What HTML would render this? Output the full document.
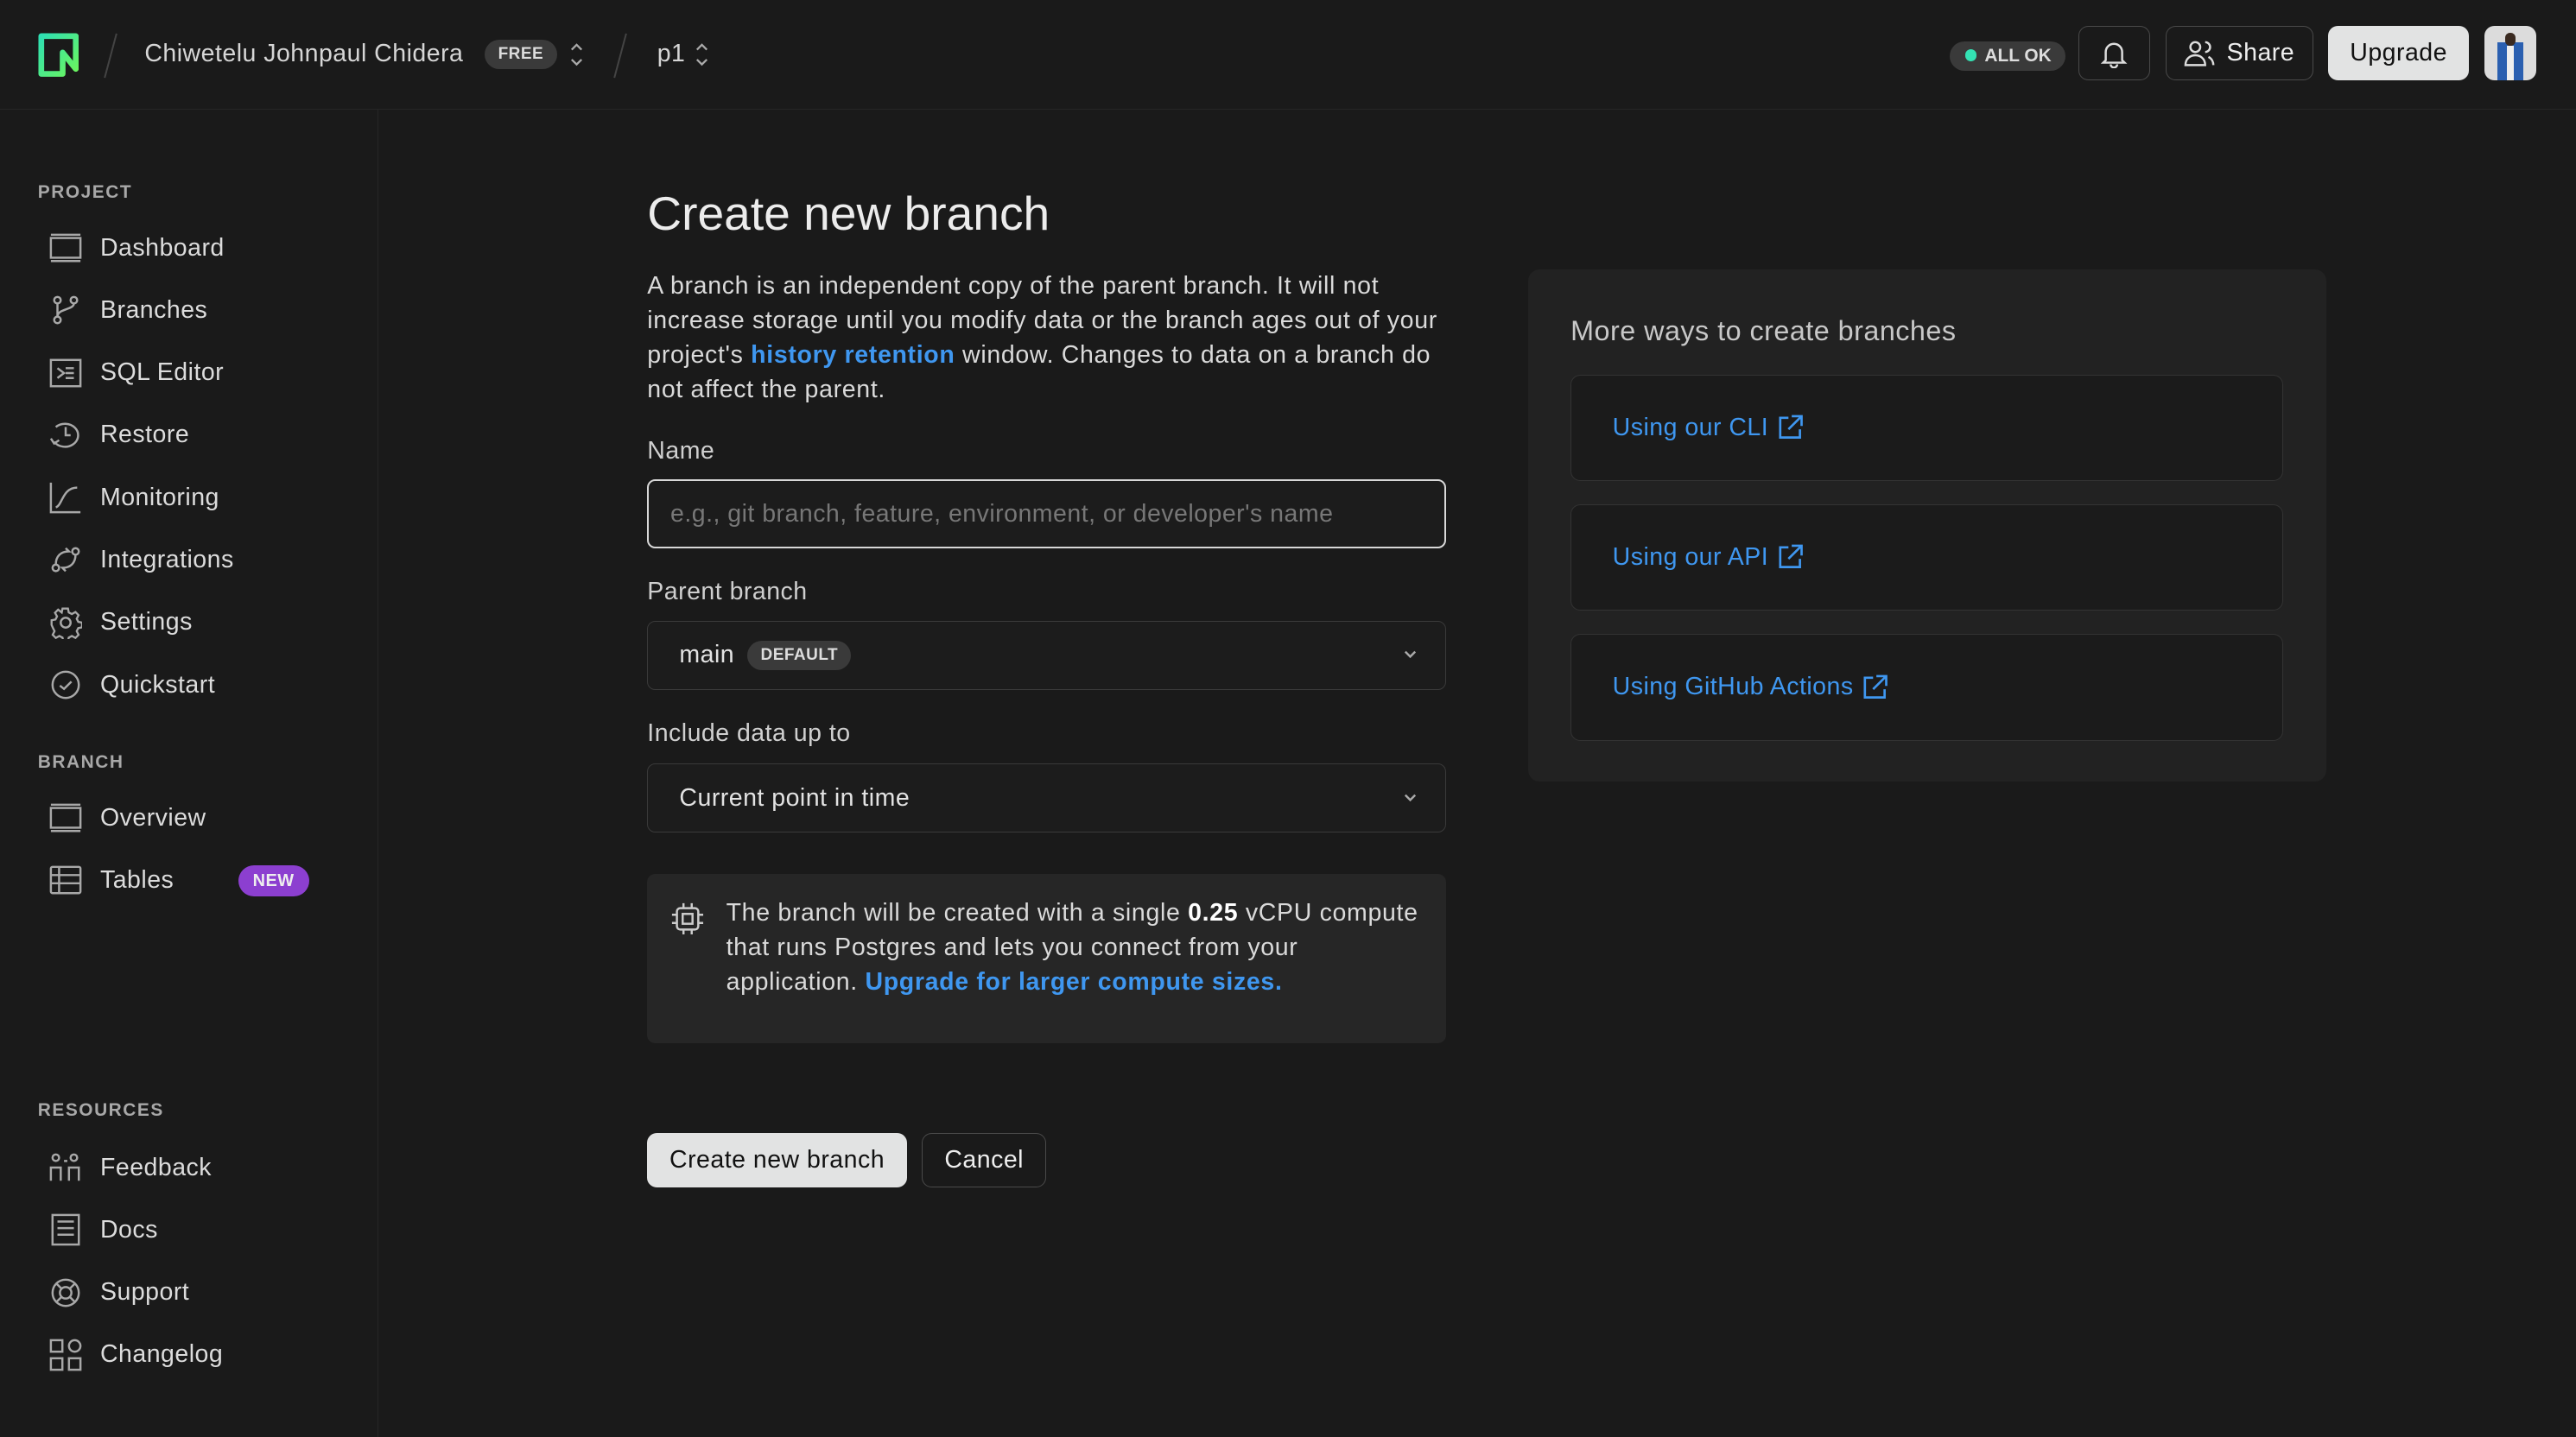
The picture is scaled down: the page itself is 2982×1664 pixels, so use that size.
<!DOCTYPE html>
<html><head><meta charset="utf-8"><style>
html,body{margin:0;padding:0;background:#1a1a1a;}
body{width:1568px;height:875px;zoom:1.9018;overflow:hidden;position:relative;font-family:"Liberation Sans",sans-serif;color:#e2e2e2;letter-spacing:0.25px;}
.abs{position:absolute;}
.top{left:0;top:0;width:1568px;height:66px;border-bottom:1px solid #262626;}
.side{left:0;top:67px;width:230px;height:808px;border-right:1px solid #262626;}
.sec{position:absolute;left:23px;font-size:11px;font-weight:bold;letter-spacing:.8px;color:#a8a8a8;}
.item{position:absolute;left:30px;height:24px;display:flex;align-items:center;font-size:15px;color:#dcdcdc;}
.item svg{width:20px;height:20px;margin-right:11px;stroke:#a8a8a8;fill:none;stroke-width:1.3;}
.lbl{font-size:15px;color:#cfcfcf;}
.field{position:absolute;left:394px;width:486px;height:42px;box-sizing:border-box;border:1px solid #3a3a3a;border-radius:5px;background:#1c1c1c;display:flex;align-items:center;font-size:15px;}
.btn{position:absolute;box-sizing:border-box;border:1px solid #4a4a4a;border-radius:6px;display:flex;align-items:center;justify-content:center;font-size:15px;}
.card{position:absolute;left:956px;width:434px;height:65px;border:1px solid #333;border-radius:6px;background:#1b1b1b;display:flex;align-items:center;padding-left:25px;box-sizing:border-box;color:#3f97f0;font-size:15px;}
.card svg{margin-left:5px}
a{color:#3f97f0;text-decoration:none;font-weight:bold;}
.chev{position:absolute;right:16px;top:15px}
</style></head><body>
<div class="abs top"></div>
<svg class="abs" style="left:23px;top:20px" width="25" height="27" viewBox="0 0 25 27"><defs><linearGradient id="g" x1="0" y1="0" x2="1" y2="1"><stop offset="0" stop-color="#2ee0b2"/><stop offset="1" stop-color="#6bf55e"/></linearGradient></defs><path d="M2 25V2h21v20l-8-10v13z" fill="none" stroke="url(#g)" stroke-width="3.5" stroke-linejoin="round"/></svg>
<div class="abs" style="left:67px;top:20px;width:1px;height:28px;background:#444;transform:rotate(15deg)"></div>
<div class="abs" style="left:88px;top:24px;font-size:15px;color:#d6d6d6">Chiwetelu Johnpaul Chidera</div>
<div class="abs" style="left:295px;top:24px;width:44px;height:18px;border-radius:9px;background:#3a3a3a;font-size:10px;font-weight:bold;color:#ddd;text-align:center;line-height:18px">FREE</div>
<svg class="abs" style="left:346px;top:25px" width="10" height="16" viewBox="0 0 10 16" fill="none" stroke="#aaa" stroke-width="1.2"><path d="M2 5l3-3 3 3M2 11l3 3 3-3"/></svg>
<div class="abs" style="left:377px;top:20px;width:1px;height:28px;background:#444;transform:rotate(15deg)"></div>
<div class="abs" style="left:400px;top:24px;font-size:15px;color:#d6d6d6">p1</div>
<svg class="abs" style="left:422px;top:25px" width="10" height="16" viewBox="0 0 10 16" fill="none" stroke="#aaa" stroke-width="1.2"><path d="M2 5l3-3 3 3M2 11l3 3 3-3"/></svg>

<div class="abs" style="left:1187px;top:25px;width:70px;height:18px;border-radius:9px;background:#3a3a3a;font-size:11px;font-weight:bold;color:#ddd;line-height:18px;letter-spacing:0"><span style="display:inline-block;width:7px;height:7px;border-radius:50%;background:#34e2b4;margin:0 5px 0 9px;vertical-align:0"></span>ALL OK</div>
<div class="btn" style="left:1265px;top:16px;width:44px;height:33px;"><svg width="18" height="18" viewBox="0 0 18 18" fill="none" stroke="#ddd" stroke-width="1.3"><path d="M4 13V8a5 5 0 0110 0v5l1.5 1.5h-13zM7 15.5a2 2 0 004 0"/></svg></div>
<div class="btn" style="left:1318px;top:16px;width:90px;height:33px;color:#eee"><svg width="20" height="18" viewBox="0 0 20 18" fill="none" stroke="#ddd" stroke-width="1.3" style="margin-right:6px"><circle cx="7" cy="5" r="3"/><path d="M1 16c0-4 3-6 6-6s6 2 6 6zM13 2a3 3 0 010 6M15 11c2 1 3 3 3 5"/></svg>Share</div>
<div class="btn" style="left:1417px;top:16px;width:86px;height:33px;background:#e2e3e3;border-color:#e2e3e3;color:#111">Upgrade</div>
<div class="abs" style="left:1512px;top:16px;width:32px;height:33px;border-radius:6px;background:#dcdcdc;overflow:hidden"><div style="position:absolute;left:8px;top:10px;width:16px;height:23px;background:#2a5fb0"></div><div style="position:absolute;left:13px;top:4px;width:6px;height:8px;border-radius:3px;background:#3a2a20"></div><div style="position:absolute;left:14px;top:12px;width:4px;height:21px;background:#eee"></div></div>

<div class="abs side"></div>
<div class="sec" style="top:111px">PROJECT</div>
<div class="item" style="top:139px"><svg viewBox="0 0 20 20"><rect x="1" y="4" width="18" height="12"/><path d="M1 2h18M1 18h18"/></svg>Dashboard</div>
<div class="item" style="top:177px"><svg viewBox="0 0 20 20"><circle cx="5" cy="4" r="2"/><circle cx="15" cy="4" r="2"/><circle cx="5" cy="16" r="2"/><path d="M5 6v8M15 6c0 4-10 3-10 8"/></svg>Branches</div>
<div class="item" style="top:215px"><svg viewBox="0 0 20 20"><rect x="1" y="2" width="18" height="16"/><path d="M5 7l4 3-4 3M10 7h5M10 10h5M10 13h5"/></svg>SQL Editor</div>
<div class="item" style="top:253px"><svg viewBox="0 0 20 20"><path d="M3 14a8 7 0 101-9M10 5v5h3M1 12l2 3 3-2"/></svg>Restore</div>
<div class="item" style="top:291px"><svg viewBox="0 0 20 20"><path d="M1 1v18h18M4 16c4-1 4-12 13-12"/></svg>Monitoring</div>
<div class="item" style="top:329px"><svg viewBox="0 0 20 20"><circle cx="4" cy="15" r="2"/><circle cx="16" cy="5" r="2"/><path d="M4 13c0-5 3-8 8-8l-2-2M16 7c0 5-3 8-8 8l2 2"/></svg>Integrations</div>
<div class="item" style="top:367px"><svg viewBox="0 0 20 20"><circle cx="10" cy="10" r="3"/><path d="M8.5 1h3l.5 2.5 2 1 2.3-1.3 2 2-1.2 2.3 1 2 2.4.5v3l-2.4.5-1 2 1.2 2.3-2 2-2.3-1.2-2 1-.5 2.4h-3l-.5-2.4-2-1-2.3 1.2-2-2 1.2-2.3-1-2L1 11.5v-3l2.5-.5 1-2-1.3-2.3 2-2L7.5 3.5 8 1z" transform="scale(.95) translate(.5 .5)"/></svg>Settings</div>
<div class="item" style="top:405px"><svg viewBox="0 0 20 20"><circle cx="10" cy="10" r="8"/><path d="M6.5 10.5l2.5 2 4.5-4.5"/></svg>Quickstart</div>
<div class="sec" style="top:458px">BRANCH</div>
<div class="item" style="top:486px"><svg viewBox="0 0 20 20"><rect x="1" y="4" width="18" height="12"/><path d="M1 2h18M1 18h18"/></svg>Overview</div>
<div class="item" style="top:524px"><svg viewBox="0 0 20 20"><rect x="1" y="2" width="18" height="16" rx="1"/><path d="M1 7h18M1 12h18M6 2v16"/></svg>Tables</div>
<div class="abs" style="left:145px;top:527px;width:43px;height:19px;border-radius:10px;background:#8c3fd0;color:#eee;font-size:10.5px;font-weight:bold;text-align:center;line-height:19px">NEW</div>
<div class="sec" style="top:670px">RESOURCES</div>
<div class="item" style="top:699px"><svg viewBox="0 0 20 20"><circle cx="4" cy="4" r="2"/><circle cx="15" cy="4" r="2"/><path d="M1 18v-8h6v8M12 18v-8h6v8M9 6h2"/></svg>Feedback</div>
<div class="item" style="top:737px"><svg viewBox="0 0 20 20"><rect x="2" y="1" width="16" height="18"/><path d="M5 5h10M5 9h10M5 13h10"/></svg>Docs</div>
<div class="item" style="top:775px"><svg viewBox="0 0 20 20"><circle cx="10" cy="10" r="8"/><circle cx="10" cy="10" r="3.5"/><path d="M4 4l3.5 3.5M16 4l-3.5 3.5M4 16l3.5-3.5M16 16l-3.5-3.5"/></svg>Support</div>
<div class="item" style="top:813px"><svg viewBox="0 0 20 20"><rect x="1" y="1" width="7" height="7"/><rect x="1" y="12" width="7" height="7"/><rect x="12" y="12" width="7" height="7"/><circle cx="15.5" cy="4.5" r="3.5"/></svg>Changelog</div>

<div class="abs" style="left:394px;top:113px;font-size:29px;color:#ececec;letter-spacing:0">Create new branch</div>
<div class="abs" style="left:394px;top:164px;width:484px;font-size:15px;line-height:21px;color:#dadada;letter-spacing:0.35px">A branch is an independent copy of the parent branch. It will not increase storage until you modify data or the branch ages out of your project's <a>history retention</a> window. Changes to data on a branch do not affect the parent.</div>
<div class="abs lbl" style="left:394px;top:266px">Name</div>
<div class="field" style="top:292px;border:1.5px solid #d8d8d8;padding-left:13px;color:#777;font-size:15px">e.g., git branch, feature, environment, or developer's name</div>
<div class="abs lbl" style="left:394px;top:352px">Parent branch</div>
<div class="field" style="top:378px;padding-left:19px">main<span style="margin-left:8px;background:#3a3a3a;border-radius:9px;padding:0 8px;font-size:10px;font-weight:bold;line-height:18px;color:#ddd">DEFAULT</span><svg class="chev" width="10" height="10" viewBox="0 0 10 10" fill="none" stroke="#aaa" stroke-width="1.3"><path d="M2 3.5l3 3 3-3"/></svg></div>
<div class="abs lbl" style="left:394px;top:438px">Include data up to</div>
<div class="field" style="top:465px;padding-left:19px">Current point in time<svg class="chev" width="10" height="10" viewBox="0 0 10 10" fill="none" stroke="#aaa" stroke-width="1.3"><path d="M2 3.5l3 3 3-3"/></svg></div>
<div class="abs" style="left:394px;top:532px;width:486px;height:103px;background:#262626;border-radius:5px"></div>
<svg class="abs" style="left:408px;top:549px" width="21" height="21" viewBox="0 0 21 21" fill="none" stroke="#ccc" stroke-width="1.3"><rect x="4" y="4" width="13" height="13" rx="2"/><rect x="7.5" y="7.5" width="6" height="6"/><path d="M8 1v3M13 1v3M8 17v3M13 17v3M1 8h3M1 13h3M17 8h3M17 13h3"/></svg>
<div class="abs" style="left:442px;top:546px;width:424px;font-size:15px;line-height:21px;color:#dadada;letter-spacing:0.35px">The branch will be created with a single <b style="color:#fff">0.25</b> vCPU compute that runs Postgres and lets you connect from your application. <a>Upgrade for larger compute sizes.</a></div>
<div class="btn" style="left:394px;top:690px;width:158px;height:33px;background:#e2e3e3;border-color:#e2e3e3;color:#111">Create new branch</div>
<div class="btn" style="left:561px;top:690px;width:76px;height:33px;color:#eee">Cancel</div>

<div class="abs" style="left:930px;top:164px;width:486px;height:312px;background:#222;border-radius:7px"></div>
<div class="abs" style="left:956px;top:192px;font-size:17px;color:#c8c8c8">More ways to create branches</div>
<div class="card" style="top:228px">Using our CLI<svg width="16" height="16" viewBox="0 0 16 16" fill="none" stroke="#3f97f0" stroke-width="1.4"><path d="M7 2H2v12h12V9M9 1h6v6M15 1L7 9"/></svg></div>
<div class="card" style="top:307px">Using our API<svg width="16" height="16" viewBox="0 0 16 16" fill="none" stroke="#3f97f0" stroke-width="1.4"><path d="M7 2H2v12h12V9M9 1h6v6M15 1L7 9"/></svg></div>
<div class="card" style="top:386px">Using GitHub Actions<svg width="16" height="16" viewBox="0 0 16 16" fill="none" stroke="#3f97f0" stroke-width="1.4"><path d="M7 2H2v12h12V9M9 1h6v6M15 1L7 9"/></svg></div>
</body></html>
